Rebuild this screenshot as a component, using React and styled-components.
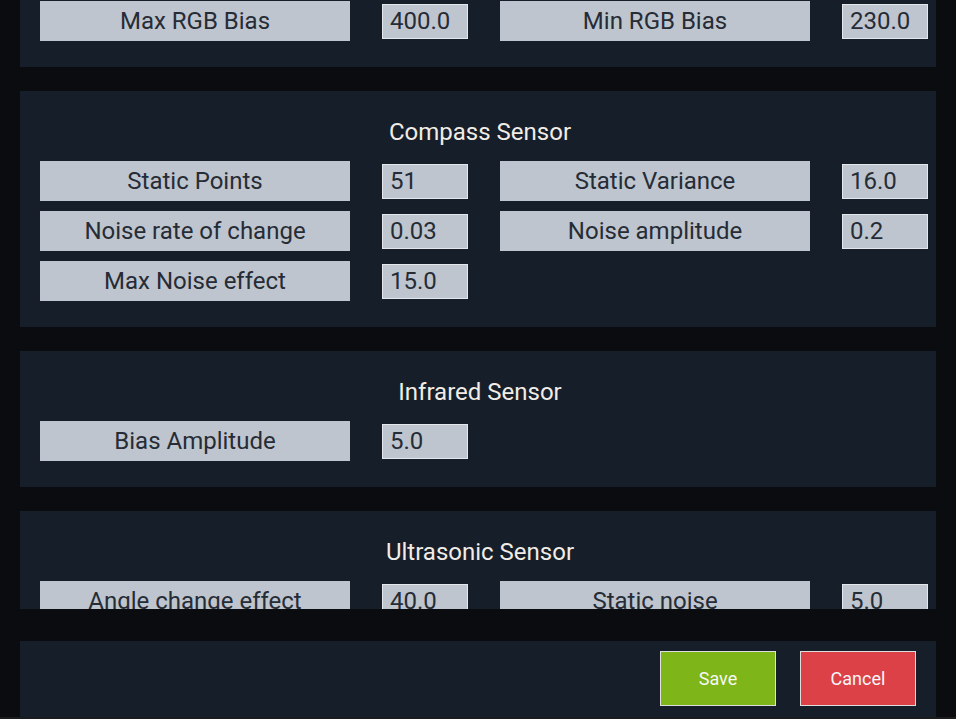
import React, { useLayoutEffect, useRef } from 'react';
import styled, { createGlobalStyle } from 'styled-components';

const GlobalStyle = createGlobalStyle`
  html, body {
    margin: 0;
    padding: 0;
    background: #1b1c1e;
  }
  body {
    font-family: Roboto, "Noto Sans", sans-serif;
  }
`;

const Page = styled.div`
  height: 717px;
  background: #0b0c10;
  padding: 0 20px;
  display: flex;
  flex-direction: column;
  gap: 32px;
  box-sizing: border-box;
`;

const ScrollArea = styled.div`
  height: 609px;
  flex: none;
  overflow-y: auto;
  scrollbar-width: none;
  display: flex;
  flex-direction: column;
  gap: 24px;

  &::-webkit-scrollbar {
    display: none;
  }
`;

const Panel = styled.section`
  flex: none;
  background: #151e29;
  padding: 0 0 26px;
`;

const Title = styled.h2`
  margin: 26px 0 14px;
  padding-left: 4px;
  height: 30px;
  line-height: 30px;
  text-align: center;
  font-size: 24px;
  font-weight: 400;
  color: #f1ece5;
`;

const Grid = styled.div`
  display: grid;
  grid-template-columns: 310px 86px 310px 86px;
  column-gap: 32px;
  row-gap: 10px;
  align-items: center;
  padding: 0 8px 0 20px;
`;

const Label = styled.div`
  height: 40px;
  line-height: 40px;
  background: #bec5ce;
  color: #262c36;
  text-align: center;
  font-size: 24px;
  white-space: nowrap;
`;

const ValueInput = styled.input`
  box-sizing: border-box;
  width: 86px;
  height: 35px;
  margin: 0;
  padding: 0 0 0 7px;
  border: 1px solid #e4e7eb;
  background: #bec5ce;
  color: #262c36;
  font-family: Roboto, "Noto Sans", sans-serif;
  font-size: 24px;
  outline: none;
`;

const Footer = styled.div`
  flex: none;
  height: 76px;
  box-sizing: border-box;
  background: #151e29;
  padding: 10px 20px 11px;
  display: flex;
  justify-content: flex-end;
  gap: 24px;
`;

const ActionButton = styled.button`
  width: 116px;
  height: 55px;
  border: 1px solid #dedede;
  background: ${p => (p.$variant === 'save' ? '#7eb518' : '#dc4148')};
  color: #f7f7f7;
  font-family: Roboto, "Noto Sans", sans-serif;
  font-size: 18px;
  cursor: pointer;
`;

const sensors = [
  {
    title: 'Color Sensor',
    fields: [
      ['Max RGB Bias', '400.0'],
      ['Min RGB Bias', '230.0'],
    ],
  },
  {
    title: 'Compass Sensor',
    fields: [
      ['Static Points', '51'],
      ['Static Variance', '16.0'],
      ['Noise rate of change', '0.03'],
      ['Noise amplitude', '0.2'],
      ['Max Noise effect', '15.0'],
    ],
  },
  {
    title: 'Infrared Sensor',
    fields: [['Bias Amplitude', '5.0']],
  },
  {
    title: 'Ultrasonic Sensor',
    fields: [
      ['Angle change effect', '40.0'],
      ['Static noise', '5.0'],
    ],
  },
];

const SensorPanel = ({ title, fields }) => (
  <Panel>
    <Title>{title}</Title>
    <Grid>
      {fields.map(([label, value]) => (
        <React.Fragment key={label}>
          <Label>{label}</Label>
          <ValueInput defaultValue={value} />
        </React.Fragment>
      ))}
    </Grid>
  </Panel>
);

export default function App() {
  const scrollRef = useRef(null);

  useLayoutEffect(() => {
    // the settings list is shown scrolled a little down
    if (scrollRef.current) scrollRef.current.scrollTop = 69;
  }, []);

  return (
    <>
      <GlobalStyle />
      <Page>
        <ScrollArea ref={scrollRef}>
          {sensors.map(s => (
            <SensorPanel key={s.title} {...s} />
          ))}
        </ScrollArea>
        <Footer>
          <ActionButton $variant="save">Save</ActionButton>
          <ActionButton $variant="cancel">Cancel</ActionButton>
        </Footer>
      </Page>
    </>
  );
}
